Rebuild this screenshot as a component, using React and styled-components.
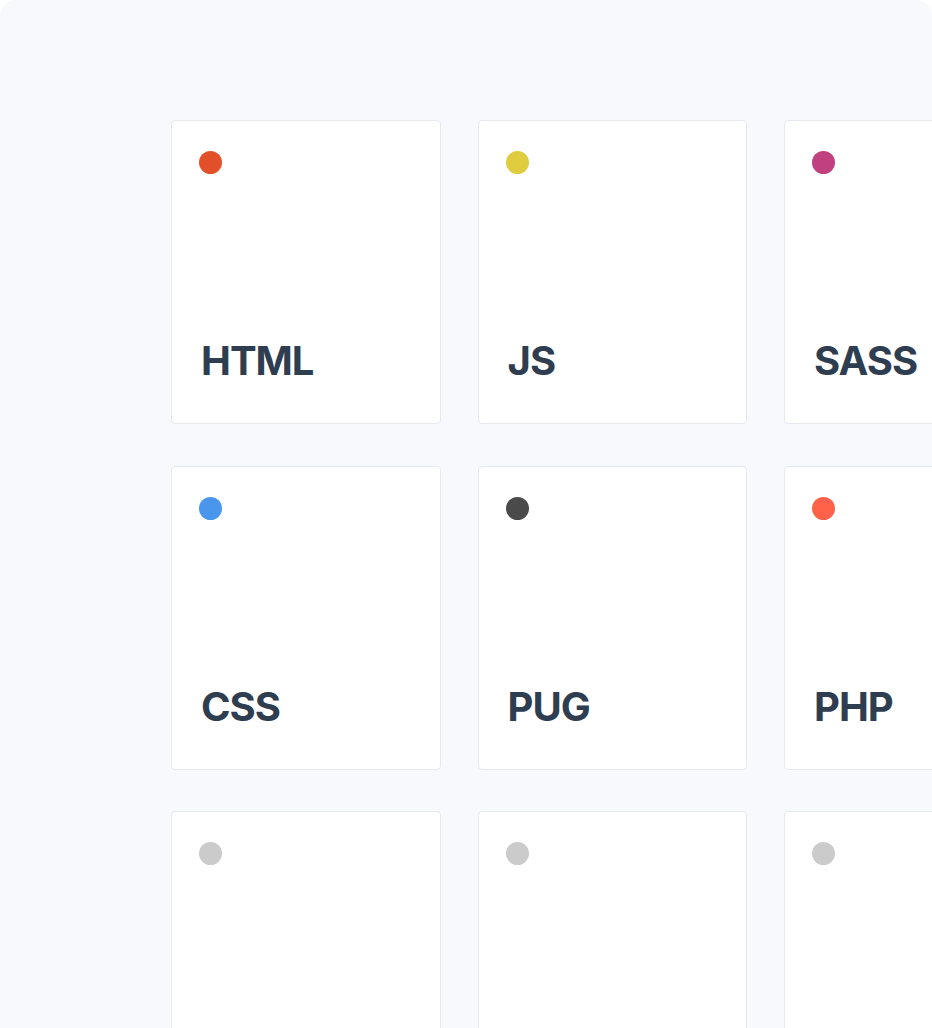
import React from "react";
import styled, { createGlobalStyle } from "styled-components";

const Global = createGlobalStyle`
  html, body { margin: 0; padding: 0; background: #ffffff; }
  body { font-family: Inter, "Noto Sans", sans-serif; }
`;

const Shell = styled.div`
  width: 932px;
  height: 1028px;
  box-sizing: border-box;
  background: #f8f9fd;
  border-radius: 16px 16px 0 0;
  overflow: hidden;
  padding: 120px 0 0 171px;
`;

const Grid = styled.div`
  display: grid;
  grid-template-columns: repeat(3, 269.5px);
  column-gap: 37px;
  row-gap: 41.5px;
  width: max-content;
`;

const Card = styled.div`
  box-sizing: border-box;
  height: 304px;
  background: #ffffff;
  border: 1px solid #e6e9f1;
  border-radius: 4px;
  padding: 30px 27px 42px 27px;
  display: flex;
  flex-direction: column;
  justify-content: space-between;
`;

const Dot = styled.span`
  display: block;
  width: 23px;
  height: 23px;
  border-radius: 50%;
  background: ${(p) => p.$color};
`;

const Label = styled.div`
  font-family: Inter, "Noto Sans", sans-serif;
  font-weight: 700;
  font-size: 40px;
  line-height: 1;
  letter-spacing: -1px;
  color: #2f3d51;
  padding-left: 2px;
`;

const items = [
  { name: "HTML", color: "#e2502a" },
  { name: "JS", color: "#dfcd3f" },
  { name: "SASS", color: "#c1407f" },
  { name: "CSS", color: "#4a96ec" },
  { name: "PUG", color: "#4a4a4a" },
  { name: "PHP", color: "#ff6149" },
  { name: "", color: "#cbcbcb" },
  { name: "", color: "#cbcbcb" },
  { name: "", color: "#cbcbcb" },
];

export default function App() {
  return (
    <>
      <Global />
      <Shell>
        <Grid>
          {items.map((it, i) => (
            <Card key={i}>
              <Dot $color={it.color} />
              <Label>{it.name}</Label>
            </Card>
          ))}
        </Grid>
      </Shell>
    </>
  );
}
